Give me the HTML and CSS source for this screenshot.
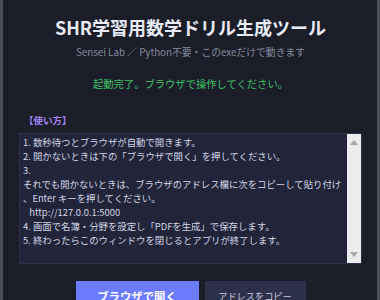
FILE: index.html
```html
<!DOCTYPE html>
<html lang="ja">
<head>
  <meta charset="UTF-8" />
  <meta name="viewport" content="width=device-width, initial-scale=1.0" />
  <title>SHR学習用数学ドリル生成ツール</title>
  <link rel="stylesheet" href="styles.css">
</head>
<body>
  <div class="app">
    <h1 class="title">SHR学習用数学ドリル生成ツール</h1>
    <p class="subtitle">Sensei Lab ／ Python不要・このexeだけで動きます</p>
    <p class="status">起動完了。ブラウザで操作してください。</p>

    <div class="howto-label">【使い方】</div>
    <div class="howto">
      <div class="howto-text">1. 数秒待つとブラウザが自動で開きます。
2. 開かないときは下の「ブラウザで開く」を押してください。
3.
それでも開かないときは、ブラウザのアドレス欄に次をコピーして貼り付け
、Enter キーを押してください。
   http://127.0.0.1:5000
4. 画面で名簿・分野を設定し「PDFを生成」で保存します。
5. 終わったらこのウィンドウを閉じるとアプリが終了します。</div>
      <div class="scrollbar">
        <span class="arrow up"></span>
        <span class="arrow down"></span>
      </div>
    </div>

    <div class="actions">
      <button class="button primary">ブラウザで開く</button>
      <button class="button secondary">アドレスをコピー</button>
    </div>
  </div>
</body>
</html>
```

FILE: styles.css
```css
html, body {
  margin: 0;
  height: 100%;
  overflow: hidden;
}
body {
  background-color: #1b1d28;
  font-family: "Noto Sans CJK JP", "Noto Sans", sans-serif;
  border-left: 3px solid #4a5156;
  border-right: 3px solid #4a5156;
  box-sizing: border-box;
}
.app {
  display: flex;
  flex-direction: column;
  padding: 16px 15px 0 16px;
}
.title {
  margin: 0;
  font-size: 18px;
  line-height: 22px;
  font-weight: 700;
  color: #e8eaf6;
  text-align: center;
}
.subtitle {
  margin: 7px 0 0;
  font-size: 9.8px;
  line-height: 14px;
  color: #858a9e;
  text-align: center;
}
.status {
  margin: 18px 0 0;
  font-size: 10.3px;
  line-height: 14px;
  color: #3fc468;
  text-align: center;
}
.howto-label {
  margin: 22px 0 0 5px;
  font-size: 9.5px;
  line-height: 14px;
  font-weight: 700;
  color: #a585f5;
}
.howto {
  margin-top: 6px;
  height: 131px;
  display: flex;
  background-color: #222539;
  border: 1px solid #2d3149;
  box-sizing: border-box;
}
.howto-text {
  flex: 1;
  padding: 1px 3px;
  font-size: 9.4px;
  line-height: 14px;
  color: #d3d6e6;
  white-space: pre;
  overflow: hidden;
}
.scrollbar {
  width: 14px;
  background-color: #ececec;
  display: flex;
  flex-direction: column;
  justify-content: space-between;
  align-items: center;
  padding: 6px 0;
}
.arrow {
  width: 0;
  height: 0;
  border-left: 4px solid transparent;
  border-right: 4px solid transparent;
}
.arrow.up {
  border-bottom: 5px solid #a6a6a6;
}
.arrow.down {
  border-top: 5px solid #a6a6a6;
}
.actions {
  margin-top: 17px;
  display: flex;
  justify-content: center;
  gap: 6px;
}
.button {
  height: 30px;
  border: none;
  font-family: inherit;
  padding: 0;
}
.button.primary {
  width: 123px;
  background-color: #6b7bff;
  color: #ffffff;
  font-size: 11.4px;
  font-weight: 700;
}
.button.secondary {
  width: 101px;
  background-color: #2d3049;
  color: #c9ccdf;
  font-size: 9.2px;
}
```
